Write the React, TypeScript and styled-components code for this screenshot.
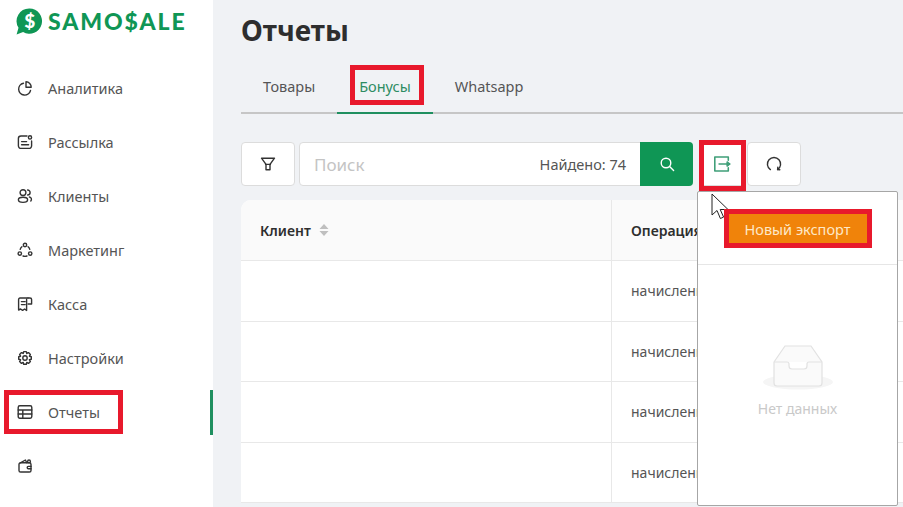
import React from "react";
import styled, { createGlobalStyle } from "styled-components";

const GREEN = "#0f9655";
const RED = "#e8192c";

const GlobalStyle = createGlobalStyle`
  html, body {
    margin: 0;
    padding: 0;
    height: 100%;
    overflow: hidden;
    background: #f0f2f5;
    font-family: "Noto Sans", "Open Sans", sans-serif;
  }
  * { box-sizing: border-box; }
`;

const Page = styled.div`
  display: grid;
  grid-template-columns: 213px 1fr;
  width: 903px;
  height: 507px;
  overflow: hidden;
`;

const Sidebar = styled.aside`
  background: #fff;
  display: flex;
  flex-direction: column;
`;

const Logo = styled.div`
  height: 61px;
  padding: 0 0 19px 16px;
  display: flex;
  align-items: center;
  gap: 5px;
`;

const LogoText = styled.span`
  font-family: "Lato", sans-serif;
  font-weight: 900;
  font-size: 23px;
  letter-spacing: 1.85px;
  color: ${GREEN};
`;

const NavItem = styled.div<{ $active?: boolean }>`
  position: relative;
  height: 54px;
  padding-left: 17px;
  display: flex;
  align-items: center;
  gap: 15px;
  font-size: 14.5px;
  color: #555;
  &::after {
    content: "";
    display: ${(p) => (p.$active ? "block" : "none")};
    position: absolute;
    right: 0;
    top: 5px;
    width: 3px;
    height: 45px;
    background: #1f8f5f;
  }
`;

const Icon = styled.svg.attrs({
  viewBox: "0 0 16 16",
  fill: "none",
  stroke: "currentColor",
  strokeWidth: 1.4,
  strokeLinecap: "round",
  strokeLinejoin: "round",
})`
  width: 16px;
  height: 16px;
  flex: none;
  color: #333;
`;

const Highlight = styled.div`
  position: absolute;
  border: 5px solid ${RED};
  pointer-events: none;
  z-index: 5;
`;

const NavHighlight = styled(Highlight)`
  left: 4px;
  top: 5px;
  width: 119px;
  height: 44px;
`;

const Main = styled.main`
  min-width: 0;
  padding: 8px 0 0 28px;
  overflow: hidden;
`;

const Title = styled.h1`
  margin: 0;
  height: 44px;
  font-size: 28px;
  line-height: 44px;
  font-weight: 700;
  color: #2e2e2e;
`;

const Tabs = styled.div`
  margin-top: 9px;
  height: 53px;
  display: flex;
  border-bottom: 2px solid #c6c6c6;
`;

const Tab = styled.div<{ $active?: boolean }>`
  position: relative;
  height: 53px;
  padding: 0 22px 2px;
  display: flex;
  align-items: center;
  font-size: 14.5px;
  color: ${(p) => (p.$active ? "#2d8c62" : "#555")};
  border-bottom: 2px solid ${(p) => (p.$active ? "#1f8f5f" : "transparent")};
`;

const TabHighlight = styled(Highlight)`
  left: 13px;
  top: 4px;
  width: 74px;
  height: 40px;
`;

const Toolbar = styled.div`
  position: relative;
  z-index: 3;
  margin-top: 28px;
  height: 44px;
  display: flex;
  align-items: flex-start;
`;

const ToolButton = styled.div`
  width: 54px;
  height: 44px;
  background: #fff;
  border: 1px solid #dcdcdc;
  border-radius: 4px;
  display: flex;
  align-items: center;
  justify-content: center;
`;

const Search = styled.div`
  margin-left: 4px;
  width: 394px;
  height: 44px;
  background: #fff;
  border: 1px solid #dcdcdc;
  border-radius: 4px;
  display: flex;
  align-items: center;
`;

const Placeholder = styled.span`
  flex: 1;
  padding-left: 14px;
  font-size: 17px;
  color: #c4c4c4;
`;

const Found = styled.span`
  padding-right: 14px;
  font-size: 14.5px;
  color: #555;
`;

const SearchButton = styled.div`
  width: 53px;
  height: 44px;
  margin: -1px -1px -1px 0;
  background: ${GREEN};
  border-radius: 0 4px 4px 0;
  display: flex;
  align-items: center;
  justify-content: center;
`;

const ExportWrap = styled.div`
  position: relative;
  margin-left: 6px;
  width: 46px;
  height: 44px;
`;

const ExportButton = styled(ToolButton)`
  width: 46px;
`;

const ExportHighlight = styled(Highlight)`
  left: 0;
  top: -2px;
  width: 47px;
  height: 51px;
`;

const RefreshButton = styled(ToolButton)`
  margin-left: 2px;
`;

const Popup = styled.div`
  position: absolute;
  left: -2px;
  top: 49px;
  width: 201px;
  height: 315px;
  background: #fff;
  border: 1px solid #a6a6a6;
  border-radius: 2px;
  display: flex;
  flex-direction: column;
`;

const PopupHead = styled.div`
  height: 73px;
  padding-top: 22px;
  border-bottom: 1px solid #e6e6e6;
  display: flex;
  justify-content: center;
`;

const ExportAction = styled.div`
  position: relative;
  width: 138px;
  height: 29px;
  background: #f0830a;
  color: #fde8c8;
  font-size: 14.5px;
  display: flex;
  align-items: center;
  justify-content: center;
`;

const ActionHighlight = styled(Highlight)`
  left: -5px;
  top: -5px;
  width: 148px;
  height: 39px;
`;

const Empty = styled.div`
  padding-top: 79px;
  display: flex;
  flex-direction: column;
  align-items: center;
  color: #c9c9c9;
  font-size: 14px;
`;

const EmptyIcon = styled.svg`
  width: 72px;
  height: 46px;
  margin-bottom: 9px;
`;

const Cursor = styled.svg`
  position: absolute;
  left: 12px;
  top: 51px;
  width: 20px;
  height: 28px;
  z-index: 4;
`;

const Table = styled.div`
  margin-top: 14px;
  width: 800px;
  background: #fff;
  border-radius: 10px 0 0 0;
  overflow: hidden;
`;

const Row = styled.div<{ $head?: boolean }>`
  display: grid;
  grid-template-columns: 371px 156px 1fr;
  height: ${(p) => (p.$head ? "61px" : "60.5px")};
  background: ${(p) => (p.$head ? "#fafafa" : "#fff")};
  border-bottom: 1px solid #e8e8e8;
`;

const Cell = styled.div<{ $head?: boolean }>`
  display: flex;
  align-items: center;
  gap: 8px;
  padding-left: 19px;
  border-right: 1px solid #e8e8e8;
  white-space: nowrap;
  overflow: hidden;
  font-size: 14px;
  font-weight: ${(p) => (p.$head ? 600 : 400)};
  color: ${(p) => (p.$head ? "#2e2e2e" : "#555")};
`;

const SortIcon = styled.svg`
  width: 10px;
  height: 14px;
`;

const navItems: { label: string; icon: React.ReactNode }[] = [
  {
    label: "Аналитика",
    icon: (
      <>
        <path d="M6.5 3.2a6 6 0 1 0 7 7.3" />
        <path d="M9 1.8a5.2 5.2 0 0 1 5.2 5.4H9z" />
      </>
    ),
  },
  {
    label: "Рассылка",
    icon: (
      <>
        <path d="M10 2H4a2.6 2.6 0 0 0-2.6 2.6v7.2A2.6 2.6 0 0 0 4 14.4h8a2.6 2.6 0 0 0 2.6-2.6V7" />
        <circle cx="13" cy="3.4" r="1.6" />
        <path d="M4.6 7.6h5M4.6 10.8h7" />
      </>
    ),
  },
  {
    label: "Клиенты",
    icon: (
      <>
        <circle cx="6" cy="4.6" r="2.9" />
        <ellipse cx="6" cy="11.8" rx="4.6" ry="2.6" />
        <path d="M10.6 2a2.5 2.5 0 0 1 0 5M12.4 9a2.4 2.4 0 0 1 1.4 4" />
      </>
    ),
  },
  {
    label: "Маркетинг",
    icon: (
      <>
        <circle cx="8" cy="3" r="1.7" />
        <circle cx="2.8" cy="11.6" r="1.7" />
        <circle cx="13.2" cy="11.6" r="1.7" />
        <path d="M3.2 7.4a5.5 5.5 0 0 1 1.7-2.6M12.8 7.4a5.5 5.5 0 0 0-1.7-2.6M6 14a5.5 5.5 0 0 0 4 0" />
      </>
    ),
  },
  {
    label: "Касса",
    icon: (
      <>
        <path d="M11 2H3a1.4 1.4 0 0 0-1.4 1.4V14l2-1 2 1.4 2-1.4 2 1.4V3.4" />
        <path d="M11 2h2a1.6 1.6 0 0 1 1.6 1.6V8H11" />
        <path d="M4.4 5.6h3.8M4.4 8.6h3.8" />
      </>
    ),
  },
  {
    label: "Настройки",
    icon: (
      <>
        <path d="M6.7 1.6h2.6l.5 1.9 1.7-.9 1.9 1.9-1 1.7 1.9.5v2.6l-1.9.5 1 1.7-1.9 1.9-1.7-1-.5 1.9H6.7l-.5-1.9-1.7 1-1.9-1.9 1-1.7-1.9-.5V6.7l1.9-.5-1-1.7 1.9-1.9 1.7.9z" />
        <circle cx="8" cy="8" r="2.2" />
      </>
    ),
  },
  {
    label: "Отчеты",
    icon: (
      <>
        <rect x="1.2" y="1.8" width="13.6" height="12.4" rx="1.6" />
        <path d="M1.2 6h13.6M1.2 10h13.6M5.8 6v8.2" />
      </>
    ),
  },
  {
    label: "",
    icon: (
      <>
        <path d="M2 6.4A1.6 1.6 0 0 1 3.6 4.8h8.8a1.6 1.6 0 0 1 1.6 1.6v6A1.6 1.6 0 0 1 12.4 14H3.6A1.6 1.6 0 0 1 2 12.4z" />
        <path d="M3.4 4.8 8.4 2l1.4 2.8" />
        <circle cx="12" cy="3.4" r="1.4" />
        <path d="M14 8.4h-2.6a1.2 1.2 0 0 0 0 2.4H14" />
      </>
    ),
  },
];

const App: React.FC = () => (
  <Page>
    <GlobalStyle />
    <Sidebar>
      <Logo>
        <svg width="27" height="27" viewBox="0 0 27 27">
          <path
            d="M13.5 0.5a12.6 12.6 0 1 1-6.4 23.5L0.6 26.5l1.9-6.8A12.6 12.6 0 0 1 13.5 0.5z"
            fill={GREEN}
          />
          <text
            x="13.7"
            y="20"
            textAnchor="middle"
            fontFamily="Lato, sans-serif"
            fontWeight="900"
            fontSize="19"
            fill="#fff"
          >
            $
          </text>
        </svg>
        <LogoText>SAMO$ALE</LogoText>
      </Logo>
      {navItems.map((item) => (
        <NavItem key={item.label || "wallet"} $active={item.label === "Отчеты"}>
          <Icon>{item.icon}</Icon>
          {item.label}
          {item.label === "Отчеты" && <NavHighlight />}
        </NavItem>
      ))}
    </Sidebar>

    <Main>
      <Title>Отчеты</Title>
      <Tabs>
        <Tab>Товары</Tab>
        <Tab $active>
          Бонусы
          <TabHighlight />
        </Tab>
        <Tab>Whatsapp</Tab>
      </Tabs>

      <Toolbar>
        <ToolButton>
          <Icon>
            <path d="M1.5 2.2h13L10 8.4v5.4H6V8.4z" />
            <path d="M5.6 8.4h4.8" />
          </Icon>
        </ToolButton>
        <Search>
          <Placeholder>Поиск</Placeholder>
          <Found>Найдено: 74</Found>
          <SearchButton>
            <Icon style={{ color: "#fff" }}>
              <circle cx="7" cy="7" r="4.8" />
              <path d="m10.6 10.6 4 4" />
            </Icon>
          </SearchButton>
        </Search>
        <ExportWrap>
          <ExportButton>
            <Icon style={{ color: "#3f9f78", width: 18, height: 18 }}>
              <path d="M13.6 4.6V1.8H1.6v12.4h12v-2.8" />
              <path d="M5.4 8h9.4" />
              <path d="m12.6 6.2 2.2 1.8-2.2 1.8z" fill="#3f9f78" />
            </Icon>
          </ExportButton>
          <ExportHighlight />
          <Popup>
            <PopupHead>
              <ExportAction>
                Новый экспорт
                <ActionHighlight />
              </ExportAction>
            </PopupHead>
            <Empty>
              <EmptyIcon viewBox="0 0 72 46">
                <ellipse cx="36" cy="38" rx="35" ry="7.5" fill="#f5f5f5" />
                <path
                  d="M12 18 23 2h26l11 16v21a3 3 0 0 1-3 3H15a3 3 0 0 1-3-3z"
                  fill="#fafafa"
                  stroke="#e2e2e2"
                  strokeWidth="1.2"
                />
                <path
                  d="M12 18h13a2 2 0 0 1 2 2v2a3 3 0 0 0 3 3h12a3 3 0 0 0 3-3v-2a2 2 0 0 1 2-2h13"
                  fill="#fff"
                  stroke="#e2e2e2"
                  strokeWidth="1.2"
                />
              </EmptyIcon>
              Нет данных
            </Empty>
          </Popup>
          <Cursor viewBox="0 0 20 28">
            <path
              d="M1 1v21l5-4.5 3.4 8 3.2-1.4-3.4-7.6H17z"
              fill="#fff"
              stroke="#222"
              strokeWidth="1"
              strokeLinejoin="round"
            />
          </Cursor>
        </ExportWrap>
        <RefreshButton>
          <Icon>
            <path d="M4.4 13.6A6.6 6.6 0 1 1 11.6 13.6" />
            <path d="m11.6 13.6.2-2.4M11.6 13.6l2.2.2" />
          </Icon>
        </RefreshButton>
      </Toolbar>

      <Table>
        <Row $head>
          <Cell $head>
            Клиент
            <SortIcon viewBox="0 0 10 14">
              <path d="M5 1 9.5 6h-9zM5 13 .5 8h9z" fill="#bfbfbf" />
            </SortIcon>
          </Cell>
          <Cell $head>Операция</Cell>
          <Cell $head />
        </Row>
        {[0, 1, 2, 3].map((i) => (
          <Row key={i}>
            <Cell />
            <Cell>начисление</Cell>
            <Cell />
          </Row>
        ))}
      </Table>
    </Main>
  </Page>
);

export default App;
